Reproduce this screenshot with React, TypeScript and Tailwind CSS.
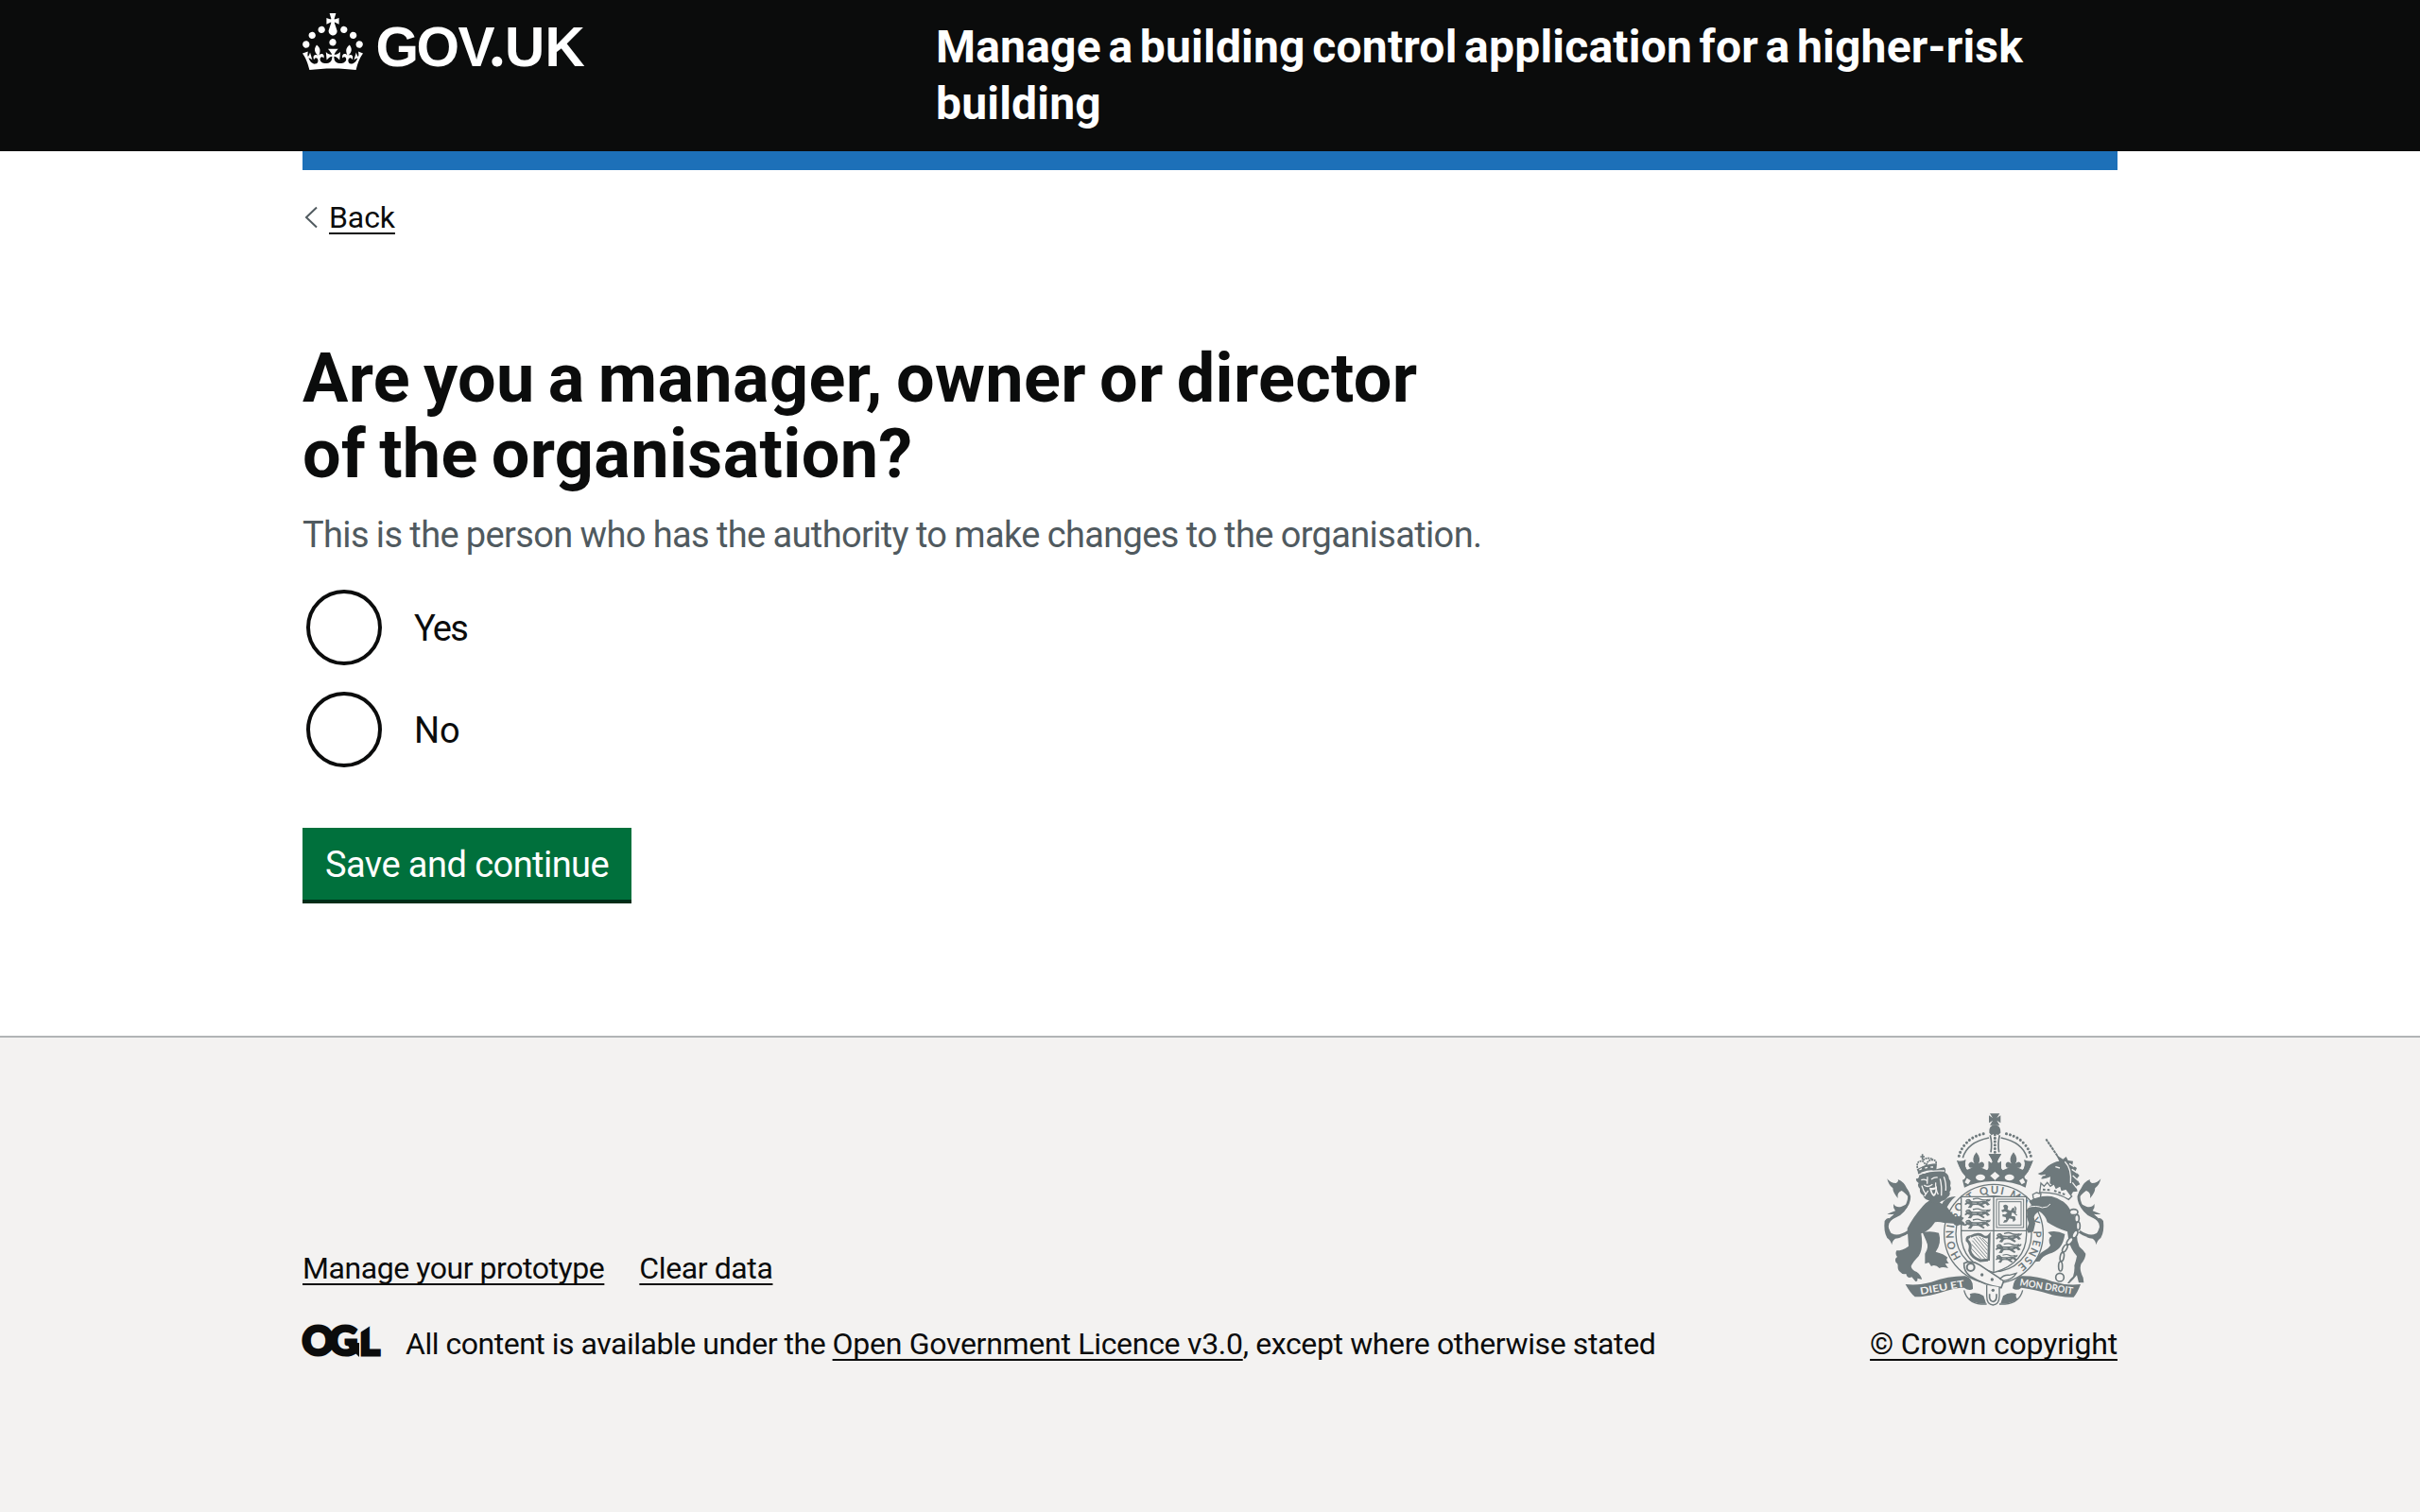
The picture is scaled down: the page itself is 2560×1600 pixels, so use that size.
import type { ReactNode } from "react";

const CROWN =
  "M22.6 10.4c-1 .4-2-.1-2.4-1-.4-.9.1-2 1-2.4.9-.4 2 .1 2.4 1s-.1 2-1 2.4m-5.9 6.7c-.9.4-2-.1-2.4-1-.4-.9.1-2 1-2.4.9-.4 2 .1 2.4 1s-.1 2-1 2.4m10.8-3.7c-1 .4-2-.1-2.4-1-.4-.9.1-2 1-2.4.9-.4 2 .1 2.4 1s0 2-1 2.4m3.3 4.8c-1 .4-2-.1-2.4-1-.4-.9.1-2 1-2.4.9-.4 2 .1 2.4 1s-.1 2-1 2.4M17 4.7l2.3 1.2V2.5l-2.3.7-.2-.2.9-3h-3.4l.9 3-.2.2c-.1.1-2.3-.7-2.3-.7v3.4L15 4.7c.1.1.1.2.2.2l-1.3 4c-.1.2-.1.4-.1.6 0 1.1.8 2 1.9 2.2h.7c1-.2 1.9-1.1 1.9-2.1 0-.2 0-.4-.1-.6l-1.3-4c-.1-.2 0-.2.1-.3m-7.6 5.7c.9.4 2-.1 2.4-1 .4-.9-.1-2-1-2.4-.9-.4-2 .1-2.4 1s0 2 1 2.4m-5 3c.9.4 2-.1 2.4-1 .4-.9-.1-2-1-2.4-.9-.4-2 .1-2.4 1s.1 2 1 2.4m-3.2 4.8c.9.4 2-.1 2.4-1 .4-.9-.1-2-1-2.4-.9-.4-2 .1-2.4 1s0 2 1 2.4m14.8 11c4.4 0 8.6.3 12.3.8 1.1-4.5 2.4-7 3.7-8.8l-2.5-.9c.2 1.3.3 1.9 0 2.7-.4-.4-.8-1.1-1.1-2.3l-1.2 4c.7-.5 1.3-.8 2-.9-1.1 2.5-2.6 3.1-3.5 3-1.1-.2-1.7-1.2-1.5-2.1.3-1.2 1.5-1.5 2.1-.1 1.1-2.3-.8-3-2-2.3 1.9-1.9 2.1-3.5.6-5.6-2.1 1.6-2.1 3.2-1.2 5.5-1.2-1.4-3.2-.6-2.5 1.6.9-1.4 2.1-.5 1.9.8-.2 1.1-1.7 2.1-3.5 1.9-2.7-.2-2.9-2.1-2.9-3.6.7-.1 1.9.5 2.9 1.9l.4-4.3c-1.1 1.1-2.1 1.4-3.2 1.4.4-1.2 2.1-3 2.1-3h-5.4s1.7 1.9 2.1 3c-1.1 0-2.1-.2-3.2-1.4l.4 4.3c1-1.4 2.2-2 2.9-1.9-.1 1.5-.2 3.4-2.9 3.6-1.9.2-3.4-.8-3.5-1.9-.2-1.3 1-2.2 1.9-.8.7-2.3-1.2-3-2.5-1.6.9-2.2.9-3.9-1.2-5.5-1.5 2-1.3 3.7.6 5.6-1.2-.7-3.1 0-2 2.3.6-1.4 1.8-1.1 2.1.1.2.9-.3 1.9-1.5 2.1-.9.2-2.4-.5-3.5-3 .6 0 1.2.3 2 .9l-1.2-4c-.3 1.1-.7 1.9-1.1 2.3-.3-.8-.2-1.4 0-2.7l-2.9.9C1.3 23 2.6 25.5 3.7 30c3.7-.5 7.9-.8 12.3-.8";

function GovUkLogo() {
  return (
    <svg viewBox="0 0 300 80" width="300" height="80" fill="#fff" className="overflow-visible" role="img" aria-label="GOV.UK">
      <path transform="scale(2)" d={CROWN} />
      <text
        y="56"
        x="77.5 120.5 164.5"
        fontFamily="'Liberation Sans', Arial, sans-serif"
        fontWeight="700"
        fontSize="58.5"
      >
        GOV
        <tspan x="198" fontFamily="Lato, sans-serif" fontWeight="900" fontSize="66">
          .
        </tspan>
        <tspan x="214 256.5">UK</tspan>
      </text>
    </svg>
  );
}

function OglLogo() {
  return (
    <svg viewBox="0 0 82 34" width="82" height="34" className="overflow-visible" role="img" aria-label="OGL">
      <text
        x="-.4 28 60"
        y="32"
        fontFamily="Lato, sans-serif"
        fontWeight="900"
        fontSize="42"
        fill="#0b0c0c"
        stroke="#0b0c0c"
        strokeWidth="3"
      >
        OGL
      </text>
      <path d="M59 -2h16v1L61 8z" fill="#f3f2f1" />
      <path d="M45 19h15v15z" fill="#0b0c0c" />
    </svg>
  );
}

const INK = "#6e797c";
const PAPER = "#f3f2f1";

/* Lion passant, facing left, drawn in an 84 × 30 box */
function Passant({ x, y }: { x: number; y: number }) {
  return (
    <g transform={`translate(${x} ${y})`}>
      <path d="M0 8q4-9 14-6l6 6q14 2 30 0 12-2 20 2l8 9-8 3-6-6q-8 2-10 4l8 6-4 4-16-9q-10-2-18 0l-6 9-10-1 7-10-8-2-7 4-2-4 5-5z" />
      <path d="M66 8q14 0 12-7M24 2q16-5 24 0t26 1" fill="none" stroke={INK} strokeWidth="4" />
      <path d="M5 7l6 1M22 14l14 1M44 14l10-1" stroke={PAPER} strokeWidth="1.5" />
    </g>
  );
}

function Tail() {
  return (
    <g>
      <path
        d="M150 430Q118 452 95 440Q76 428 84 402Q94 384 120 372Q152 350 152 318Q146 292 124 290"
        fill="none"
        stroke={INK}
        strokeWidth="9"
      />
      <path d="M82 262Q92 276 110 276Q120 270 116 264Q136 272 144 292Q154 306 154 324Q138 306 128 300Q112 306 116 324Q100 306 100 292Q86 282 82 262Z" />
      <path d="M102 342Q112 356 128 350L150 340Q140 372 112 384L88 396Q94 382 104 374Q92 376 82 374Q98 368 108 364Q100 354 102 342Z" />
      <path d="M74 396Q82 384 90 388L84 412L96 440Q108 448 130 446Q116 452 108 452Q98 458 97 472Q92 456 82 450Q70 430 74 396Z" />
    </g>
  );
}

/* Left half of the crown; mirrored to make the right half */
function CrownHalf() {
  return (
    <g>
      <path
        d="M310 190Q316 166 334 148Q356 124 396 118"
        fill="none"
        stroke={INK}
        strokeWidth="9"
        strokeLinecap="round"
        strokeDasharray="0.1 12.2"
      />
      <path d="M322 196Q336 146 405 132" fill="none" stroke={INK} strokeWidth="5" />
      <path d="M409 124Q416 150 411 178" fill="none" stroke={INK} strokeWidth="5" />
      <path d="M303 204Q318 210 330 202Q326 222 340 236H398Q412 222 416 208Q414 194 404 184H424V270Q370 268 327 290L321 266Q332 262 330 254Q316 240 312 226Q310 212 303 204Z" />
      <path d="M330 210Q326 238 352 240Q392 242 402 222L398 190H330Z" fill={PAPER} />
      <path d="M365 178Q381 198 372 214Q386 202 390 216Q390 230 378 226L402 236V246H330V236L354 226Q340 230 340 216Q346 202 359 214Q349 198 365 178Z" />
      <path d="M404 184H444L432 204Q428 214 436 212L444 206V232L434 226Q428 224 432 240H416Q420 224 414 226L404 232V206L412 212Q420 214 416 204Z" />
      <path d="M303 204Q318 210 332 202Q324 222 338 240L326 248Q308 224 303 204Z" />
      <path d="M335 260L347 268L339 280L328 274Z" fill={PAPER} />
      <ellipse cx="378" cy="258" rx="15" ry="10" fill={PAPER} />
    </g>
  );
}

function RoyalArms() {
  return (
    <svg viewBox="45 54 750 612" width="250" height="204" fill={INK} role="img" aria-label="Royal coat of arms">
      <defs>
        <path id="motto" d="M317 511A127 127 0 1 1 486 545" />
      </defs>

      {/* crown */}
      <path d="M408 55H439L430 69L442 61V85L430 77L439 92H408L417 77L405 85V61L417 69Z" />
      <path d="M406 116Q404 92 424 91Q443 92 442 116L434 124Q424 116 413 124Z" />
      <path d="M424 122V178" fill="none" stroke={INK} strokeWidth="9" strokeLinecap="round" strokeDasharray="0.1 11" />
      <CrownHalf />
      <g transform="matrix(-1 0 0 1 848 0)">
        <CrownHalf />
      </g>
      <path d="M424 240l15 13-15 13-15-13z" fill={PAPER} />

      {/* tails */}
      <Tail />
      <g transform="matrix(-1 0 0 1 842 0)">
        <Tail />
      </g>

      {/* garter */}
      <circle cx="420" cy="437" r="157" fill={PAPER} stroke={INK} strokeWidth="4" />
      <circle cx="420" cy="437" r="120" fill="none" stroke={INK} strokeWidth="4" />
      <text fontFamily="Lato, sans-serif" fontSize="34" fontWeight="700">
        <textPath href="#motto" textLength="596">
          HONI SOIT QUI MAL Y PENSE
        </textPath>
      </text>

      {/* shield */}
      <path d="M317 319H524V440Q522 530 420 560Q319 530 317 440Z" fill={PAPER} stroke={INK} strokeWidth="4" />
      <path d="M420 319V560M317 427H524" stroke={INK} strokeWidth="4" />
      <Passant x={330} y={325} />
      <Passant x={330} y={358} />
      <Passant x={330} y={391} />
      <Passant x={429} y={434} />
      <Passant x={428} y={468} />
      <g transform="translate(428 503) scale(.85)">
        <Passant x={0} y={0} />
      </g>
      <g fill="none" stroke={INK}>
        <rect x="429" y="327" width="86" height="90" strokeWidth="3" />
        <rect x="437" y="335" width="70" height="74" strokeWidth="3" />
      </g>
      <path d="M450 348q10-8 16 2l-2 10 10 4 6-10 8 2-4 8 8 2-2 6-12-2-2 10 12 2 2 10-8 8-2-10-10-2-8 12-12 2 4-8 6-2-2-8-10-2 0-8 8 2 8-6-8-4-8 2-4-6 10-4z" />
      <path d="M486 350q8 6 2 14t6 14" fill="none" stroke={INK} strokeWidth="4" />
      <g fill="none" stroke={INK}>
        <path d="M345 446Q334 446 336 458Q350 470 344 490Q350 512 378 522L402 520" strokeWidth="9" />
        <path d="M346 446Q372 432 386 444Q398 452 406 442L404 522" strokeWidth="8" />
        <path
          d="M352 458L398 512M356 450L400 502M364 446L400 490M374 446L402 478M384 450L402 468M350 470L392 516M350 484L380 516"
          strokeWidth="2.5"
        />
      </g>

      {/* buckle and strap */}
      <path
        d="M326 530Q352 520 376 536Q420 566 452 586L444 608Q392 600 346 572Q324 556 326 530Z"
        fill={PAPER}
        stroke={INK}
        strokeWidth="5"
      />
      <path d="M452 586Q480 582 492 562L470 568Q452 566 440 580Z" fill={PAPER} stroke={INK} strokeWidth="4" />
      <circle cx="347" cy="543" r="12" fill="none" stroke={INK} strokeWidth="6" />
      <circle cx="383" cy="567" r="5" />
      <circle cx="415" cy="582" r="5" />
      <path d="M398 600V634Q398 662 418 663Q438 662 438 634V606" fill={PAPER} stroke={INK} strokeWidth="4" />
      <path d="M407 628V640Q410 652 419 652Q428 650 429 638V628" fill="none" stroke={INK} strokeWidth="5" />
      <circle cx="418" cy="616" r="5" />

      {/* lion supporter */}
      <path d="M300 318Q268 318 256 342Q226 318 204 340Q168 376 146 420Q148 446 150 476Q132 490 112 490Q106 500 114 510Q104 516 110 528Q116 530 116 538Q114 552 126 560Q130 566 142 564Q146 580 160 574L172 588Q180 590 178 578L192 582Q190 568 176 558Q160 552 158 540Q164 526 182 508Q198 484 190 436Q214 430 234 400Q246 398 262 402L292 404Q300 416 314 408L330 412Q330 400 318 396L326 386Q312 378 298 382Q282 368 272 352Q284 330 300 318Z" />
      <path d="M194 432Q222 426 246 434Q256 466 236 494Q262 500 274 512Q266 518 278 530L266 532L276 546Q256 540 248 546Q234 532 222 540L214 528L202 532V500Q216 480 206 460Z" />
      <path d="M174 262Q182 262 184 254Q178 246 180 240Q190 244 200 246Q230 232 262 226Q270 230 266 242Q278 248 278 262Q286 272 282 284Q288 296 280 304Q284 314 274 320Q266 332 256 332Q246 342 234 340Q222 336 212 330Q198 326 196 314Q184 308 186 294Q176 284 182 276Q172 270 174 262Z" />
      <g stroke={PAPER} strokeWidth="4" fill="none">
        <path d="M178 251Q214 234 264 237" />
        <path d="M190 266Q200 262 208 268M222 264Q232 256 242 258M210 256L209 278M199 282Q211 292 226 280M192 284Q196 300 204 310M236 274Q234 292 244 312M250 262Q256 284 254 316M262 256Q270 276 268 300M200 318Q208 306 212 300" />
      </g>
      <path d="M216 290Q230 294 240 286Q242 312 230 318Q220 312 216 290Z" fill={PAPER} />
      <path d="M223 297Q230 299 235 295Q235 308 230 311Q225 308 223 297Z" />
      <path d="M176 232L182 246Q208 232 238 234L240 214Q206 214 176 232Z" />
      <path d="M184 234l8-4M202 228l8-2M220 225h8" stroke={PAPER} strokeWidth="4" />
      <path
        d="M178 228Q174 204 194 206Q202 212 206 222Q208 204 224 202Q240 202 237 216M196 203Q208 192 228 200"
        fill="none"
        stroke={INK}
        strokeWidth="5"
        strokeDasharray="6 2"
      />
      <path d="M194 184v18M187 192h14" stroke={INK} strokeWidth="5" />

      {/* unicorn supporter */}
      <path d="M586 136L624 192" stroke={INK} strokeWidth="6" strokeDasharray="9 2" />
      <path d="M560 246L574 240L592 222Q610 208 628 206L618 186L640 200L650 192L656 204L672 206L670 218L684 228L680 238L692 252L684 262L694 280L682 286L686 302L672 304L660 324Q644 322 620 296L598 276L600 256Q584 264 570 262L576 254Z" />
      <g stroke={PAPER} strokeWidth="4" fill="none">
        <path d="M646 208Q668 230 664 276M660 214L676 224M668 232L686 244M671 252L688 268M670 274L684 292M616 224L630 228M562 254L584 250" />
      </g>
      <path
        d="M570 276L580 286L590 274L600 286L612 278L618 292L632 284L636 298L650 294L660 308L668 318L658 328Q620 304 566 306Z"
        fill={PAPER}
        stroke={INK}
        strokeWidth="4"
      />
      <path d="M576 296L600 298M612 300L646 312" stroke={INK} strokeWidth="6" strokeDasharray="8 6" />
      <path d="M544 312l12-6 14 4-2 14-14 6-8-6z" fill={PAPER} stroke={INK} strokeWidth="4" />
      <path d="M532 334Q562 314 604 318Q646 328 664 362Q686 392 686 420Q680 452 692 478Q706 490 712 500Q712 514 698 532Q690 548 704 576L706 592H690L684 568L674 580L660 594H654Q660 582 672 572Q678 552 676 538Q682 520 684 508Q664 484 658 458L654 430Q620 420 590 400Q586 380 566 366Q552 370 548 384L552 404L546 430L530 434L524 424L532 404Q524 386 526 364Q530 350 540 346Z" />
      <path d="M530 352Q556 346 574 354Q592 354 600 342" fill="none" stroke={PAPER} strokeWidth="3" />
      <path d="M592 432Q618 424 646 438Q642 466 630 480Q616 496 596 500Q574 508 566 524L550 526Q562 500 578 492Q594 484 600 474Q590 452 604 444Z" />
      <g fill={PAPER} stroke={INK} strokeWidth="5">
        <ellipse cx="674" cy="368" rx="13" ry="9" />
        <ellipse cx="684" cy="388" rx="7" ry="12" />
        <ellipse cx="688" cy="412" rx="6" ry="13" />
        <ellipse cx="678" cy="438" rx="7" ry="13" transform="rotate(28 678 438)" />
        <ellipse cx="662" cy="460" rx="7" ry="13" transform="rotate(38 662 460)" />
        <ellipse cx="646" cy="483" rx="6" ry="13" transform="rotate(28 646 483)" />
        <ellipse cx="637" cy="510" rx="6" ry="14" transform="rotate(10 637 510)" />
        <ellipse cx="632" cy="540" rx="6" ry="15" />
        <circle cx="630" cy="575" r="13" />
      </g>

      {/* ribbon */}
      <path d="M140 597Q180 602 222 590Q280 570 330 571Q356 578 354 612Q342 620 326 608Q296 608 250 624Q204 638 170 637Q156 626 140 597Z" />
      <path d="M696 597Q650 602 606 588Q560 570 506 571Q484 578 480 610Q494 620 508 608Q556 614 596 628Q640 640 674 638Q686 624 696 597Z" />
      <path d="M326 616Q336 656 380 660H398M512 616Q502 656 456 660H438" fill="none" stroke={INK} strokeWidth="4" />
      <path d="M344 628Q366 620 388 634L396 658Q360 660 340 644Q350 638 344 628ZM492 628Q470 620 450 634L442 658Q476 660 496 644Q488 638 492 628Z" />
      <g fill={PAPER} fontFamily="Lato, sans-serif" fontWeight="700">
        <text
          transform="translate(188 630) rotate(-10)"
          fontSize="31"
          textLength="142"
          lengthAdjust="spacingAndGlyphs"
        >
          DIEU ET
        </text>
        <text
          transform="translate(502 601) rotate(9.5)"
          fontSize="31"
          textLength="170"
          lengthAdjust="spacingAndGlyphs"
        >
          MON DROIT
        </text>
      </g>
    </svg>
  );
}

function Link({ children, className = "" }: { children: ReactNode; className?: string }) {
  return (
    <a
      href="#"
      className={`underline decoration-2 underline-offset-[5px] [text-decoration-skip-ink:none] ${className}`}
    >
      {children}
    </a>
  );
}

function Radio({ label, className }: { label: string; className: string }) {
  return (
    <label className="flex h-[88px] items-center pl-1">
      <input type="radio" name="role" className="size-20 appearance-none rounded-full border-4 border-[#0b0c0c]" />
      <span className={`pt-0.5 pl-[34px] text-[38px] leading-[50px] ${className}`}>{label}</span>
    </label>
  );
}

export default function App() {
  return (
    <div className="flex min-h-[1600px] flex-col bg-white font-['Roboto',sans-serif] text-[#0b0c0c]">
      <header className="h-40 bg-[#0b0c0c] text-white">
        <div className="mx-auto flex w-[1920px]">
          <div className="w-[670px] pt-3.5">
            <GovUkLogo />
          </div>
          <p className="w-[1240px] pt-5 text-[48px] leading-[60px] font-bold tracking-[0.2px] [word-spacing:-4.6px]">
            Manage a building control application for a higher-risk building
          </p>
        </div>
      </header>

      <div className="mx-auto w-[1920px] grow">
        <div className="h-5 bg-[#1d70b8]" />
        <nav className="flex h-[70px] items-start gap-3 pt-[30px] pl-[2px] text-[32px] leading-10">
          <svg viewBox="0 0 14 24" width="14" height="24" className="mt-2" fill="none" stroke="#505a5f" strokeWidth="2">
            <path d="M13 1.5L2 12l11 10.5" />
          </svg>
          <Link className="tracking-[-0.1px]">Back</Link>
        </nav>
        <main className="pt-[111px]">
          <h1 className="w-[1240px] text-[72px] leading-20 font-bold tracking-[0.35px] [word-spacing:-4.2px]">
            Are you a manager, owner or director
            <br />
            of the organisation?
          </h1>
          <p className="mt-5 text-[38px] leading-[50px] tracking-[-0.64px] text-[#505a5f] [word-spacing:-0.85px]">
            This is the person who has the authority to make changes to the organisation.
          </p>
          <div className="mt-[29px] flex flex-col gap-5">
            <Radio label="Yes" className="tracking-[-1.8px]" />
            <Radio label="No" className="tracking-normal" />
          </div>
          <button className="mt-[60px] h-[76px] w-[348px] bg-[#00703c] pt-0.5 text-[38px] leading-[38px] tracking-[-0.55px] text-white shadow-[0_4px_0_#002d18]">
            Save and continue
          </button>
        </main>
      </div>

      <footer className="h-[504px] border-t-2 border-[#b1b4b6] bg-[#f3f2f1] text-[32px] leading-10">
        <div className="mx-auto flex w-[1920px] items-end justify-between pt-20">
          <div className="flex flex-col gap-10">
            <div className="flex gap-[37px]">
              <Link className="tracking-[-0.44px]">Manage your prototype</Link>
              <Link className="tracking-[-0.4px]">Clear data</Link>
            </div>
            <div className="flex items-start">
              <OglLogo />
              <p className="pl-[27px] tracking-[-0.38px]">
                <span className="tracking-[-0.48px]">All content is available under the </span>
                <Link className="tracking-[-0.29px]">Open Government Licence v3.0</Link>, except where otherwise stated
              </p>
            </div>
          </div>
          <div className="flex flex-col items-center gap-5">
            <RoyalArms />
            <Link className="tracking-[-0.18px]">© Crown copyright</Link>
          </div>
        </div>
      </footer>
    </div>
  );
}
